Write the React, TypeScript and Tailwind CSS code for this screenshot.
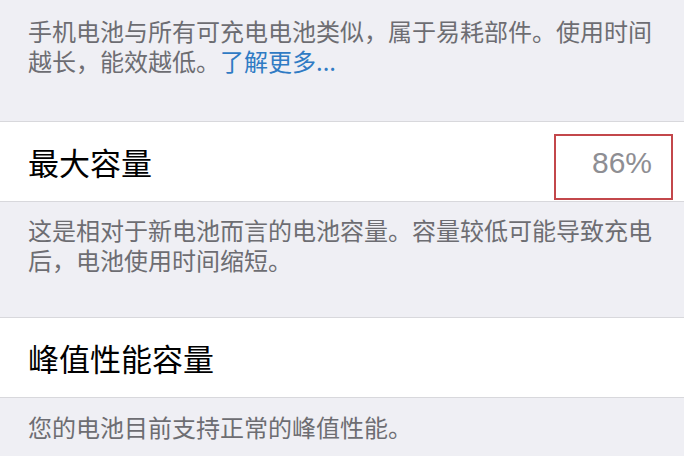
import React from 'react'

const Footer = ({ children, className = '' }: { children: React.ReactNode; className?: string }) => (
    <p className={`px-[28px] text-[24px] leading-[30px] text-[#6d6d72] ${className}`}>{children}</p>
)

const Cell = ({ title, value }: { title: string; value?: string }) => (
    <div className="relative w-full h-[81px] bg-white border-y border-[#d8d8dc] flex items-center justify-between pl-[28px] pr-[32px]">
        <span className="text-[31px] text-black leading-none">{title}</span>
        {value && (
            <>
                <span className="text-[30px] font-light text-[#8e8e93] leading-none mt-[2px]" style={{ fontFamily: '"Liberation Sans", "Noto Sans", sans-serif' }}>
                    {value}
                </span>
                {/* annotation box */}
                <div className="absolute right-[11px] top-[12px] w-[119px] h-[66px] border-2 border-[#c3474b]"></div>
            </>
        )}
    </div>
)

const App = () => {
    return (
        <div className="w-[684px] h-[456px] overflow-hidden bg-[#efeff4] flex flex-col" style={{ fontFamily: '"Noto Sans CJK SC", "Noto Sans", sans-serif' }}>
            <Footer className="pt-[16px]">
                手机电池与所有可充电电池类似，属于易耗部件。使用时间越长，能效越低。<span className="text-[#2f7bc4]">了解更多...</span>
            </Footer>

            <div className="mt-[45px]">
                <Cell title="最大容量" value="86%" />
            </div>

            <Footer className="pt-[13px]">
                这是相对于新电池而言的电池容量。容量较低可能导致充电后，电池使用时间缩短。
            </Footer>

            <div className="mt-[42px]">
                <Cell title="峰值性能容量" />
            </div>

            <Footer className="pt-[14px]">您的电池目前支持正常的峰值性能。</Footer>
        </div>
    )
}

export default App
